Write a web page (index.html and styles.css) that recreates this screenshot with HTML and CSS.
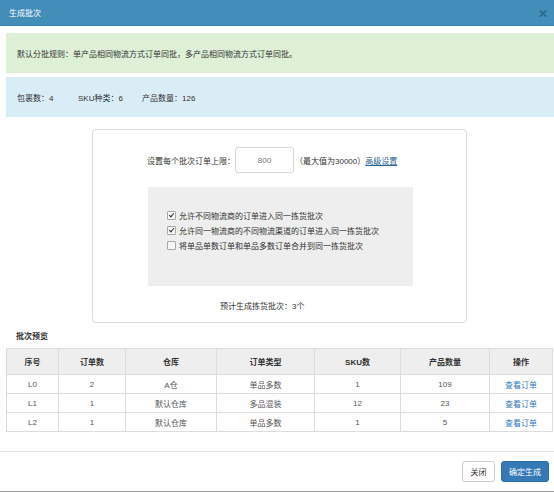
FILE: index.html
```html
<!DOCTYPE html>
<html>
<head>
<meta charset="utf-8">
<link rel="stylesheet" href="styles.css">
</head>
<body>
<div class="modal">
  <div class="modal-header">
    <span class="title">生成批次</span>
    <span class="close">&#x2715;</span>
  </div>
  <div class="modal-body">
    <div class="alert alert-green">默认分批规则：单产品相同物流方式订单同批，多产品相同物流方式订单同批。</div>
    <div class="alert alert-blue">
      <span class="stat s1">包裹数：4</span>
      <span class="stat s2">SKU种类：6</span>
      <span class="stat">产品数量：126</span>
    </div>
    <div class="panel">
      <div class="limit-row">
        <span class="limit-label">设置每个批次订单上限：</span>
        <input class="limit-input" type="text" value="800">
        <span class="limit-hint">（最大值为30000）</span><a class="adv-link" href="#">高级设置</a>
      </div>
      <div class="options">
        <label class="opt"><span class="cb checked"></span>允许不同物流商的订单进入同一拣货批次</label>
        <label class="opt"><span class="cb checked"></span>允许同一物流商的不同物流渠道的订单进入同一拣货批次</label>
        <label class="opt"><span class="cb"></span>将单品单数订单和单品多数订单合并到同一拣货批次</label>
      </div>
      <div class="estimate">预计生成拣货批次：3个</div>
    </div>
    <div class="section-title">批次预览</div>
    <table class="preview">
      <colgroup>
        <col class="c1"><col class="c2"><col class="c3"><col class="c4"><col class="c5"><col class="c6"><col class="c7">
      </colgroup>
      <thead>
        <tr><th>序号</th><th>订单数</th><th>仓库</th><th>订单类型</th><th>SKU数</th><th>产品数量</th><th>操作</th></tr>
      </thead>
      <tbody>
        <tr><td>L0</td><td>2</td><td>A仓</td><td>单品多数</td><td>1</td><td>109</td><td><a href="#">查看订单</a></td></tr>
        <tr><td>L1</td><td>1</td><td>默认仓库</td><td>多品混装</td><td>12</td><td>23</td><td><a href="#">查看订单</a></td></tr>
        <tr><td>L2</td><td>1</td><td>默认仓库</td><td>单品多数</td><td>1</td><td>5</td><td><a href="#">查看订单</a></td></tr>
      </tbody>
    </table>
  </div>
  <div class="modal-footer">
    <button class="btn btn-default">关闭</button>
    <button class="btn btn-primary">确定生成</button>
  </div>
</div>
</body>
</html>
```
FILE: styles.css
```css
html, body {
  margin: 0;
  padding: 0;
  background: #fff;
}
body {
  font-family: "Liberation Sans", "Noto Sans CJK SC", sans-serif;
  font-size: 8px;
  color: #333;
}
.modal {
  width: 554px;
  height: 491px;
  border-bottom: 1px solid #9a9a9a;
  display: flex;
  flex-direction: column;
}
.modal-header {
  height: 25px;
  background: #438eb9;
  border-bottom: 1px solid #3b7fa8;
  display: flex;
  align-items: center;
  justify-content: space-between;
  padding: 0 6px 0 9px;
}
.title {
  color: #fff;
  font-size: 8px;
}
.close {
  color: #2b6890;
  font-size: 12px;
  font-weight: bold;
  margin-top: 2px;
}
.modal-body {
  padding: 7px 0 0 6px;
  flex: 1;
}
.alert {
  height: 40px;
  display: flex;
  align-items: center;
  padding-left: 11px;
  color: #333;
}
.alert-green {
  background: #dff0d8;
}
.alert-blue {
  background: #d9edf7;
  margin-top: 4px;
}
.stat.s1 {
  width: 61px;
}
.stat.s2 {
  width: 64px;
}
.panel {
  margin: 12px 0 0 86px;
  width: 318px;
  height: 192px;
  border: 1px solid #dcdcdc;
  border-radius: 4px;
  display: flex;
  flex-direction: column;
  align-items: flex-start;
  padding-left: 55px;
  box-sizing: content-box;
}
.limit-row {
  margin-top: 17px;
  display: flex;
  align-items: center;
  height: 26px;
  margin-left: -1px;
}
.limit-input {
  width: 59px;
  height: 26px;
  box-sizing: border-box;
  border: 1px solid #d5d5d5;
  border-radius: 3px;
  text-align: center;
  font-family: "Liberation Sans", "Noto Sans CJK SC", sans-serif;
  font-size: 8px;
  color: #777;
  margin: 0;
  padding: 0;
}
.limit-hint {
  margin-left: 1px;
}
.adv-link {
  color: #2a6496;
  text-decoration: underline;
}
.options {
  margin-top: 14px;
  width: 265px;
  height: 99px;
  background: #eeeeee;
  box-sizing: border-box;
  padding: 21px 0 0 19px;
  display: flex;
  flex-direction: column;
}
.opt {
  display: flex;
  align-items: center;
  height: 15px;
  color: #333;
}
.cb {
  width: 7px;
  height: 7px;
  border: 1px solid #a8a8a8;
  border-radius: 1px;
  background: #f6f6f6;
  margin-right: 3px;
  position: relative;
  flex: none;
}
.cb.checked::after {
  content: "";
  position: absolute;
  left: 2px;
  top: 0px;
  width: 2px;
  height: 4px;
  border: solid #333;
  border-width: 0 1px 1px 0;
  transform: rotate(40deg);
}
.estimate {
  margin-top: 14px;
  margin-left: 72px;
}
.section-title {
  margin: 6px 0 0 10px;
  font-weight: bold;
  font-size: 8px;
  height: 15px;
  line-height: 15px;
}
.preview {
  margin-top: 4px;
  width: 546px;
  border-collapse: collapse;
  table-layout: fixed;
}
.c1 { width: 52px; }
.c2 { width: 67px; }
.c3 { width: 91px; }
.c4 { width: 98px; }
.c5 { width: 86px; }
.c6 { width: 89px; }
.c7 { width: 63px; }
.preview th, .preview td {
  border: 1px solid #dddddd;
  text-align: center;
  padding: 0;
}
.preview th {
  background: #eeeeee;
  height: 25px;
  font-weight: bold;
}
.preview td {
  height: 18px;
  color: #555;
}
.preview td a {
  color: #337ab7;
  text-decoration: none;
}
.modal-footer {
  height: 39px;
  border-top: 1px solid #e5e5e5;
  display: flex;
  justify-content: flex-end;
  align-items: center;
  padding-right: 5px;
  gap: 6px;
}
.btn {
  height: 21px;
  border-radius: 3px;
  font-family: "Liberation Sans", "Noto Sans CJK SC", sans-serif;
  font-size: 8px;
  padding: 0;
  margin-top: -1px;
}
.btn-default {
  width: 33px;
  background: #fff;
  border: 1px solid #ccc;
  color: #333;
}
.btn-primary {
  width: 48px;
  background: #337ab7;
  border: 1px solid #2e6da4;
  color: #fff;
}
```
